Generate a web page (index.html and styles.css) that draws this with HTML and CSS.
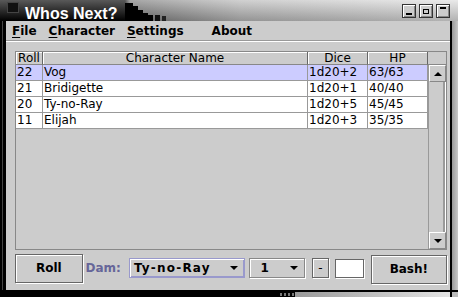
FILE: index.html
```html
<!DOCTYPE html>
<html lang="en">
<head>
    <meta charset="UTF-8">
    <title>Whos Next?</title>
    <link rel="stylesheet" href="styles.css">
</head>
<body>
<div class="window">
    <div class="titlebar">
        <span class="win-icon"></span>
        <span class="title">Whos Next?</span>
        <svg class="steps" width="45" height="21" viewBox="0 0 45 21">
            <rect x="0" y="3" width="8" height="18" fill="#000"/>
            <rect x="8" y="6" width="5" height="15" fill="#000"/>
            <rect x="13" y="10" width="5" height="11" fill="#000"/>
            <rect x="18" y="13" width="5" height="8" fill="#000"/>
            <rect x="23" y="15" width="5" height="6" fill="#000"/>
            <rect x="30" y="15" width="5" height="6" fill="#111"/>
            <rect x="37" y="16" width="4" height="5" fill="#222"/>
        </svg>
        <div class="spacer"></div>
        <div class="tbtns">
            <span class="tbtn"><i class="ico-min"></i></span>
            <span class="tbtn"><i class="ico-max"></i></span>
            <span class="tbtn"><i class="ico-close"></i></span>
        </div>
    </div>
    <div class="frame">
        <div class="edge-left"></div>
        <div class="main">
            <div class="menubar">
                <span class="menu"><u>F</u>ile</span>
                <span class="menu"><u>C</u>haracter</span>
                <span class="menu"><u>S</u>ettings</span>
                <span class="menu about">About</span>
            </div>
            <div class="content">
                <div class="pane">
                    <div class="row head">
                        <span>Roll</span>
                        <span>Character Name</span>
                        <span>Dice</span>
                        <span>HP</span>
                    </div>
                    <div class="corner"></div>
                    <div class="viewport">
                        <div class="row selected"><span>22</span><span>Vog</span><span>1d20+2</span><span>63/63</span></div>
                        <div class="row"><span>21</span><span>Bridigette</span><span>1d20+1</span><span>40/40</span></div>
                        <div class="row"><span>20</span><span>Ty-no-Ray</span><span>1d20+5</span><span>45/45</span></div>
                        <div class="row"><span>11</span><span>Elijah</span><span>1d20+3</span><span>35/35</span></div>
                    </div>
                    <div class="vscroll">
                        <div class="sbtn"><i class="tri-up"></i></div>
                        <div class="track"></div>
                        <div class="sbtn"><i class="tri-down"></i></div>
                    </div>
                </div>
                <div class="controls">
                    <button class="btn roll">Roll</button>
                    <span class="dam">Dam:</span>
                    <div class="combo focus"><span class="val">Ty-no-Ray</span><i class="tri-down"></i></div>
                    <div class="combo small"><span class="val">1</span><i class="tri-down"></i></div>
                    <button class="btn minus">-</button>
                    <div class="field"></div>
                    <button class="btn bash">Bash!</button>
                </div>
            </div>
        </div>
        <div class="edge-right"></div>
    </div>
    <div class="edge-bottom"><span class="grip"></span></div>
</div>
</body>
</html>
```

FILE: styles.css
```css
body {
    margin: 0;
    background: #000;
}
.window {
    width: 458px;
    height: 297px;
    display: flex;
    flex-direction: column;
    background: #000;
    overflow: hidden;
}

/* title bar */
.titlebar {
    height: 21px;
    display: flex;
    align-items: flex-start;
    background:
        linear-gradient(to bottom, rgba(255,255,255,0.35), rgba(0,0,0,0.2)),
        linear-gradient(to right, #000 0, #000 125px, #777 130px, #b8b8b8 240px, #dedede 450px);
}
.win-icon {
    width: 10px;
    height: 9px;
    margin: 2px 0 0 7px;
    border: 1px solid #444;
    background: #111;
}
.title {
    margin: 5px 0 0 6px;
    font: bold 16px "Liberation Sans", Arial, sans-serif;
    line-height: 17px;
    color: #fff;
}
.steps {
    margin-left: 8px;
    flex: none;
}
.spacer { flex: 1; }
.tbtns {
    display: flex;
    gap: 3px;
    margin: 4px 8px 0 0;
}
.tbtn {
    width: 12px;
    height: 12px;
    background: #cccccc;
    border: 1px solid #333;
    box-shadow: inset 1px 1px #fff, inset -1px -1px #888;
    position: relative;
}
.tbtn i { position: absolute; background: #000; }
.ico-min { left: 3px; top: 8px; width: 6px; height: 2px; }
.ico-max { left: 3px; top: 4px; width: 4px; height: 3px; border: 1px solid #000; background: #ccc !important; }
.ico-close { left: 3px; top: 2px; width: 6px; height: 2px; }

/* frame */
.frame {
    flex: 1;
    display: flex;
}
.edge-left {
    width: 6px;
    background: linear-gradient(to right, #000 0 2px, #444 2px 3px, #000 3px);
}
.edge-right {
    width: 8px;
    background: linear-gradient(to right, #000 0 2px, #999 2px, #c8c8c8);
}
.edge-bottom {
    height: 7px;
    position: relative;
    background:
        linear-gradient(#000 0 2px, transparent 2px),
        linear-gradient(to right, #000 0 295px, #999 295px, #e4e4e4 450px, #000 450px 452px, #bbb 452px);
}
.grip {
    position: absolute;
    left: 280px;
    top: 3px;
    width: 14px;
    height: 3px;
    background: repeating-linear-gradient(to right, #777 0 2px, #000 2px 4px);
}
.main {
    width: 444px;
    background: #cccccc;
    display: flex;
    flex-direction: column;
}

/* menu */
.menubar {
    height: 19px;
    display: flex;
    align-items: center;
    padding-left: 0;
    border-bottom: 1px solid #999;
    box-shadow: 0 1px #fff;
    font: bold 12px "DejaVu Sans", sans-serif;
    color: #000;
}
.menu { padding: 0 6px; }
.menu u { text-underline-offset: 2px; }
.menubar .about { margin-left: 16px; }

/* table */
.content {
    flex: 1;
    padding: 10px 3px 0 9px;
    display: flex;
    flex-direction: column;
}
.pane {
    display: grid;
    grid-template-columns: 412px 18px;
    grid-template-rows: 13px 184px;
    border: 1px solid #888;
    font: 12px "DejaVu Sans", sans-serif;
}
.row {
    display: grid;
    grid-template-columns: 27px 265px 60px 60px;
    height: 16px;
    line-height: 15px;
    background: #fff;
    color: #000;
}
.row span {
    padding-left: 1px;
    border-right: 1px solid #999;
    border-bottom: 1px solid #999;
    white-space: nowrap;
    overflow: hidden;
}
.row.selected { background: #ccccff; }
.row.head {
    height: 13px;
    line-height: 12px;
    background: #cccccc;
}
.row.head span {
    text-align: center;
    padding: 0;
    border-right-color: #666;
    border-bottom-color: #888;
    box-shadow: inset 1px 1px #fff;
}
.corner {
    background: #ccc;
    border-bottom: 1px solid #888;
}
.viewport { background: #cccccc; }
.vscroll {
    display: flex;
    flex-direction: column;
    border-left: 1px solid #999;
    background: #cccccc;
}
.sbtn {
    height: 15px;
    border: 1px solid #888;
    border-top-color: #fff;
    border-left-color: #fff;
    display: flex;
    align-items: center;
    justify-content: center;
}
.track {
    flex: 1;
    border-right: 1px solid #fff;
    box-shadow: inset -2px 0 #999;
}
.tri-up, .tri-down {
    width: 0;
    height: 0;
    border-left: 4px solid transparent;
    border-right: 4px solid transparent;
}
.tri-up { border-bottom: 4px solid #000; }
.tri-down { border-top: 4px solid #000; }

/* controls */
.controls {
    display: flex;
    align-items: center;
    height: 30px;
    margin-top: 3px;
    font: bold 12px "DejaVu Sans", sans-serif;
}
.btn {
    font: inherit;
    color: #000;
    background: #cccccc;
    border: 1px solid #666;
    box-shadow: inset 1px 1px #fff, 1px 1px #fff;
    padding: 0;
}
.roll { width: 69px; height: 29px; }
.bash { width: 78px; height: 29px; margin-left: 7px; margin-top: 2px; }
.minus { width: 18px; height: 20px; margin-left: 7px; font-weight: normal; }
.dam {
    margin-left: 3px;
    color: #666699;
}
.combo {
    height: 18px;
    display: flex;
    align-items: center;
    justify-content: space-between;
    border: 1px solid #888;
    box-shadow: inset 1px 1px #fff, 1px 1px #fff;
    background: #cccccc;
    padding: 0 6px 0 4px;
    margin-left: 4px;
}
.combo.focus {
    width: 107px;
    margin-left: 8px;
    border-color: #9999cc;
    box-shadow: inset 1px 1px #fff, inset -1px -1px #9999cc;
}
.combo.focus .val { letter-spacing: 1.2px; }
.combo.small { width: 38px; padding-left: 10px; }
.field {
    width: 27px;
    height: 17px;
    margin-left: 6px;
    background: #fff;
    border: 1px solid #666;
    box-shadow: 1px 1px #fff;
}
```
